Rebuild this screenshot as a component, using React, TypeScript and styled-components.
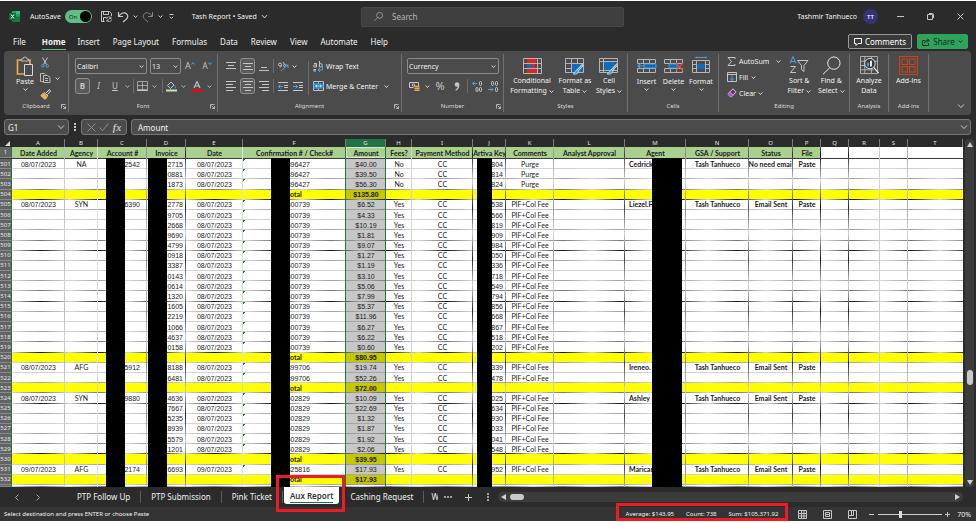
import React from "react";
import styled, { createGlobalStyle, css } from "styled-components";

const UI = `"Noto Sans", "Open Sans", sans-serif`;
const SHEET = `"Lato", "Open Sans", sans-serif`;
const DIGITS = `"Liberation Sans", Arial, sans-serif`;

const c = {
  chrome: "#2b2b2b",
  ribbon: "#4b4b4b",
  line: "#707070",
  text: "#f2f2f2",
  icon: "#c6c6c6",
  green: "#5fbf86",
  blue: "#4ba3e3",
  fill: "#0f6cbd",
};

const GlobalStyle = createGlobalStyle`
  * { box-sizing: border-box; }
  body { margin: 0; background: #fff; font-family: ${UI}; }
  button, input, select { font-family: inherit; margin: 0; padding: 0; border: 0; background: none; color: inherit; }
  svg { display: block; flex: none; }
`;

const Page = styled.div`
  min-height: 100vh;
  display: flex;
  flex-direction: column;
  padding: 1px 1px 2px 0;
  background: #fff;
  overflow: hidden;
`;

const Window = styled.main`
  flex: 1;
  display: flex;
  flex-direction: column;
  background: ${c.chrome};
  color: ${c.text};
`;

/* ---------- title bar ---------- */

const TitleBar = styled.header`
  display: grid;
  grid-template-columns: minmax(0, 361fr) minmax(0, 263fr) minmax(0, 352fr);
  align-items: center;
  height: 31px;
  font-size: 7px;
`;

const TitleGroup = styled.div<{ $end?: boolean }>`
  display: flex;
  align-items: center;
  white-space: nowrap;
  ${(p) => (p.$end ? "justify-content: flex-end; padding-right: 10px;" : "padding-left: 9px;")}
`;

const AutoSave = styled.label`
  display: flex;
  align-items: center;
  gap: 4px;
  margin: 0 9px 0 10px;
`;

const Switch = styled.span`
  position: relative;
  display: flex;
  align-items: center;
  width: 27px;
  height: 13px;
  padding-left: 4px;
  border-radius: 7px;
  background: ${c.green};
  color: #1c2b22;
  font-size: 6px;
  input {
    position: absolute;
    inset: 0;
    opacity: 0;
  }
  &::after {
    content: "";
    position: absolute;
    right: 1px;
    width: 11px;
    height: 11px;
    border-radius: 50%;
    background: #000;
  }
`;

const IconButton = styled.button<{ $w?: number; $h?: number; $on?: boolean; $color?: string }>`
  display: flex;
  flex: none;
  align-items: center;
  justify-content: center;
  width: ${(p) => p.$w ?? 12}px;
  height: ${(p) => p.$h ?? 14}px;
  color: ${(p) => p.$color ?? c.icon};
  ${(p) => p.$on && css`
    background: #5a5a5a;
    border: 1px solid #8f8f8f;
    border-radius: 3px;
  `}
`;

const DocTitle = styled.button`
  display: flex;
  align-items: center;
  gap: 4px;
  margin-left: 11px;
  font-size: 7px;
`;

const SearchBox = styled.label`
  display: flex;
  align-items: center;
  gap: 9px;
  height: 20px;
  padding-left: 12px;
  border: 1px solid #484848;
  border-radius: 2px;
  background: #3f3f3f;
  color: #b4b4b4;
  input {
    flex: 1;
    font-size: 8px;
    outline: none;
    &::placeholder { color: #b4b4b4; opacity: 1; }
  }
`;

const Avatar = styled.span`
  display: flex;
  align-items: center;
  justify-content: center;
  width: 15px;
  height: 15px;
  margin: 0 16px 0 6px;
  border-radius: 50%;
  background: #373277;
  font-size: 6px;
  font-weight: 600;
`;

const Controls = styled.div`
  display: flex;
  gap: 18px;
`;

/* ---------- ribbon tabs ---------- */

const TabRow = styled.nav`
  display: flex;
  align-items: center;
  height: 19px;
  padding: 0 8px 0 7px;
`;

const RibbonTab = styled.button<{ $active?: boolean }>`
  height: 16px;
  margin: 0 7px 0 6px;
  font-size: 8px;
  line-height: 15px;
  white-space: nowrap;
  ${(p) => p.$active && css`
    margin: 0 6px 0 9px;
    font-weight: 700;
    border-bottom: 1px solid ${c.green};
  `}
`;

const TabActions = styled.div`
  display: flex;
  gap: 5px;
  margin-left: auto;
`;

const ActionButton = styled.button<{ $primary?: boolean }>`
  display: flex;
  align-items: center;
  justify-content: center;
  gap: 3px;
  width: ${(p) => (p.$primary ? 51 : 64)}px;
  height: 15px;
  border: 1px solid ${(p) => (p.$primary ? "#2fa35c" : "#9a9a9a")};
  border-radius: 2px;
  background: ${(p) => (p.$primary ? "#2fa35c" : "#3a3a3a")};
  color: ${(p) => (p.$primary ? "#10291a" : "#fff")};
  font-size: 8px;
`;

/* ---------- ribbon ---------- */

const Ribbon = styled.section`
  display: grid;
  grid-template-columns:
    minmax(0, 65fr) minmax(0, 149fr) minmax(0, 184fr) minmax(0, 102fr) minmax(0, 124fr)
    minmax(0, 91fr) minmax(0, 131fr) minmax(0, 39fr) minmax(0, 40fr) minmax(0, 42fr);
  height: 64px;
  margin: 0 5px 4px 4px;
  padding-top: 3px;
  border-radius: 4px;
  background: ${c.ribbon};
  font-size: 7px;
`;

const Group = styled.div`
  display: flex;
  flex-direction: column;
  height: 58px;
  border-right: 1px solid ${c.line};
`;

const GroupBody = styled.div<{ $gap?: number; $pad?: number; $center?: boolean }>`
  flex: 1;
  display: flex;
  gap: ${(p) => p.$gap ?? 0}px;
  padding-left: ${(p) => p.$pad ?? 0}px;
  ${(p) => p.$center && "justify-content: center;"}
`;

const GroupLabel = styled.div`
  position: relative;
  height: 11px;
  font-size: 6px;
  line-height: 11px;
  text-align: center;
  color: #dcdcdc;
  svg {
    position: absolute;
    right: 2px;
    top: 3px;
  }
`;

const Stack = styled.div<{ $gap?: number; $top?: number }>`
  display: flex;
  flex-direction: column;
  gap: ${(p) => p.$gap ?? 4}px;
  padding-top: ${(p) => p.$top ?? 4}px;
`;

const Line = styled.div<{ $gap?: number; $h?: number }>`
  display: flex;
  align-items: center;
  gap: ${(p) => p.$gap ?? 0}px;
  height: ${(p) => p.$h ?? 16}px;
  white-space: nowrap;
`;

const Rule = styled.span<{ $h?: number; $gap?: number }>`
  flex: none;
  width: 1px;
  height: ${(p) => p.$h ?? 14}px;
  margin: 0 ${(p) => p.$gap ?? 2}px;
  background: #6c6c6c;
`;

const BigButton = styled.button<{ $w: number }>`
  display: flex;
  flex: none;
  flex-direction: column;
  align-items: center;
  width: ${(p) => p.$w}px;
  padding-top: 2px;
  font-size: 7px;
  line-height: 10px;
  white-space: nowrap;
  > svg { margin-bottom: 1px; }
`;

const BigText = styled.span`
  display: flex;
  align-items: center;
  gap: 2px;
  height: 10px;
`;

const TextButton = styled.button<{ $gap?: number }>`
  display: flex;
  align-items: center;
  gap: ${(p) => p.$gap ?? 3}px;
  font-size: 7px;
  white-space: nowrap;
`;

const Picker = styled.span<{ $w: number }>`
  position: relative;
  display: flex;
  align-items: center;
  width: ${(p) => p.$w}px;
  height: 16px;
  border: 1px solid #8c8c8c;
  border-radius: 2px;
  select {
    appearance: none;
    width: 100%;
    height: 100%;
    padding-left: 1px;
    font-size: 7px;
    outline: none;
  }
  svg {
    position: absolute;
    right: 2px;
    pointer-events: none;
  }
`;

const Glyph = styled.span<{ $size?: number; $bold?: boolean; $italic?: boolean; $under?: boolean }>`
  font-size: ${(p) => p.$size ?? 8}px;
  line-height: 10px;
  font-weight: ${(p) => (p.$bold ? 700 : 400)};
  font-style: ${(p) => (p.$italic ? "italic" : "normal")};
  text-decoration: ${(p) => (p.$under ? "underline" : "none")};
`;

const Collapse = styled.div`
  display: flex;
  align-items: flex-end;
  justify-content: flex-end;
  height: 58px;
  padding: 0 5px 1px 0;
`;

/* ---------- formula bar ---------- */

const FormulaBar = styled.div`
  display: flex;
  align-items: center;
  height: 16px;
  margin: 0 5px 4px 4px;
`;

const Box = styled.div<{ $w?: number }>`
  display: flex;
  align-items: center;
  justify-content: space-between;
  ${(p) => (p.$w ? `width: ${p.$w}px; flex: none;` : "flex: 1;")}
  height: 16px;
  padding: 0 3px;
  border: 1px solid #767676;
  border-radius: 3px;
  background: ${c.ribbon};
  color: ${c.icon};
  input {
    flex: 1;
    min-width: 0;
    color: ${c.text};
    font-size: 8px;
    outline: none;
  }
`;

const FormulaInput = styled(Box)`
  margin-left: 4px;
  padding: 0 2px 0 6px;
`;

const Fx = styled.span`
  font: italic 700 10px "Liberation Serif", serif;
`;

const Dots = styled.span`
  width: 12px;
  display: flex;
  justify-content: center;
  color: ${c.icon};
`;

/* ---------- sheet ---------- */

type Col = { letter: string; width: number; title?: string; line: string };

const columns: Col[] = [
  { letter: "A", width: 53, title: "Date Added", line: "#b9b9b9" },
  { letter: "B", width: 33, title: "Agency", line: "#e6e6e6" },
  { letter: "C", width: 49, title: "Account #", line: "#8a8a8a" },
  { letter: "D", width: 39, title: "Invoice", line: "#222" },
  { letter: "E", width: 57, title: "Date", line: "#e6e6e6" },
  { letter: "F", width: 103, title: "Confirmation # / Check#", line: "#217346" },
  { letter: "G", width: 40, title: "Amount", line: "#217346" },
  { letter: "H", width: 26, title: "Fees?", line: "#d0d0d0" },
  { letter: "I", width: 61, title: "Payment Method", line: "#222" },
  { letter: "J", width: 33, title: "Artiva Key", line: "#333" },
  { letter: "K", width: 48, title: "Comments", line: "#999" },
  { letter: "L", width: 71, title: "Analyst Approval", line: "#444" },
  { letter: "M", width: 61, title: "Agent", line: "#888" },
  { letter: "N", width: 63, title: "GSA / Support", line: "#555" },
  { letter: "O", width: 44, title: "Status", line: "#333" },
  { letter: "P", width: 28, title: "File", line: "#111" },
  { letter: "Q", width: 28, line: "#222" },
  { letter: "R", width: 31, line: "#ccc" },
  { letter: "S", width: 28, line: "#aaa" },
  { letter: "T", width: 55, line: "transparent" },
];

const template = `12px ${columns.map((k) => `minmax(0, ${k.width}fr)`).join(" ")}`;

type Entry = {
  total?: boolean;
  date?: string;
  agency?: string;
  account?: string;
  invoice?: string;
  conf?: string;
  amount: string;
  fee?: string;
  key?: string;
  note?: string;
  agent?: string;
  status?: string;
  day?: string;
};

type Lead = { date: string; agency: string; account: string; agent: string; status: string };

function block(lead: Lead, conf: string, fee: string, note: string, lines: string[], total: string): Entry[] {
  const rows: Entry[] = lines.map((l, i) => {
    const [invoice, amount, key] = l.split(" ");
    return { ...(i === 0 ? lead : {}), day: lead.date, invoice, amount, key, conf, fee, note };
  });
  return [...rows, { total: true, conf: "otal", amount: total }];
}

const entries: Entry[] = [
  ...block(
    { date: "08/07/2023", agency: "NA", account: "2542", agent: "Cedrick", status: "No need email" },
    "396427", "No", "Purge",
    ["2715 $40.00 804", "0881 $39.50 814", "1873 $56.30 824"],
    "$135.80",
  ),
  ...block(
    { date: "08/07/2023", agency: "SYN", account: "6390", agent: "Liezel.F", status: "Email Sent" },
    "400739", "Yes", "PIF+Col Fee",
    [
      "2778 $6.52 538", "9705 $4.33 566", "2668 $10.19 819", "9690 $1.81 909", "4799 $9.07 984",
      "0918 $1.27 050", "3387 $1.19 336", "0143 $3.10 718", "0614 $5.06 549", "1320 $7.99 794",
      "1605 $5.37 856", "2219 $11.96 668", "1066 $6.27 867", "4637 $6.22 518", "0158 $0.60 202",
    ],
    "$80.95",
  ),
  ...block(
    { date: "08/07/2023", agency: "AFG", account: "5912", agent: "Ireneo.", status: "Email Sent" },
    "399706", "Yes", "PIF+Col Fee",
    ["8188 $19.74 339", "6481 $52.26 478"],
    "$72.00",
  ),
  ...block(
    { date: "08/07/2023", agency: "SYN", account: "9880", agent: "Ashley", status: "Email Sent" },
    "402829", "Yes", "PIF+Col Fee",
    ["4636 $10.09 025", "7667 $22.69 634", "5235 $1.32 930", "8939 $1.87 033", "5579 $1.92 041", "1201 $2.06 548"],
    "$39.95",
  ),
  ...block(
    { date: "09/07/2023", agency: "AFG", account: "2174", agent: "Marican", status: "Email Sent" },
    "325816", "Yes", "PIF+Col Fee",
    ["6693 $17.93 952"],
    "$17.93",
  ),
];

const SheetArea = styled.div`
  flex: 1;
  display: flex;
`;

const SheetWrap = styled.div`
  position: relative;
  flex: 1;
  min-width: 0;
  display: flex;
`;

const Table = styled.table`
  flex: 1;
  min-width: 0;
  display: flex;
  flex-direction: column;
  background: #fff;
  color: #1a1a1a;
  font-family: ${SHEET};
  font-size: 7px;
`;

const Head = styled.thead`
  display: block;
`;

const LetterRow = styled.tr`
  display: grid;
  grid-template-columns: ${template};
  height: 8px;
  background: ${c.chrome};
`;

const Letter = styled.th<{ $on?: boolean }>`
  display: flex;
  align-items: center;
  justify-content: center;
  padding: 0;
  border-right: 1px solid #7a7a7a;
  background: ${(p) => (p.$on ? "#217346" : c.chrome)};
  color: #e4e4e4;
  font: 400 6px/8px ${UI};
`;

const Corner = styled.td`
  display: flex;
  align-items: flex-end;
  justify-content: flex-end;
  padding: 0 2px 1px 0;
`;

const TitleRow = styled.tr`
  display: grid;
  grid-template-columns: ${template};
  height: 12px;
  border-bottom: 1px solid #3a3a3a;
`;

const TitleCell = styled.th<{ $filled: boolean; $on?: boolean }>`
  display: flex;
  align-items: center;
  justify-content: center;
  overflow: hidden;
  padding: 0;
  background: ${(p) => (p.$filled ? "#a9d08e" : "#fff")};
  box-shadow: ${(p) => (p.$on ? "inset 0 0 0 1px #d5ead0" : "none")};
  white-space: nowrap;
`;

const RowHead = styled.th`
  display: flex;
  align-items: center;
  justify-content: center;
  overflow: hidden;
  padding: 0;
  border-right: 1px solid #217346;
  border-bottom: 1px solid #8a8a8a;
  background: #636363;
  color: #e8e8e8;
  font: 400 6px/8px ${UI};
`;

const Body = styled.tbody`
  flex: 1;
  display: grid;
  grid-template-rows: repeat(32, minmax(10px, 1fr)) 2px;
`;

const Row = styled.tr<{ $total?: boolean }>`
  --ink: #a2a2a2;
  display: grid;
  grid-template-columns: ${template};
  min-height: 0;
  overflow: hidden;
  background:
    linear-gradient(90deg, transparent, var(--ink), transparent) 12px 100% / 58px 1px repeat-x,
    linear-gradient(#d6d6d6, #d6d6d6) 0 100% / 100% 1px no-repeat,
    ${(p) => (p.$total ? "#ffff00" : "#fff")};
  font-weight: ${(p) => (p.$total ? 700 : 400)};
  &:nth-child(5n + 1) { --ink: #cfcfcf; }
  &:nth-child(5n + 3) { --ink: #777; }
  &:nth-child(5n + 4) { --ink: #111; }
`;

const Cell = styled.td<{ $align?: "end" | "start"; $pad?: number; $bold?: boolean }>`
  display: flex;
  align-items: center;
  justify-content: ${(p) => (p.$align ? `flex-${p.$align}` : "center")};
  min-width: 0;
  overflow: hidden;
  padding: 0;
  ${(p) => p.$align === "end" && `padding-right: ${p.$pad}px;`}
  ${(p) => p.$align === "start" && `padding-left: ${p.$pad}px;`}
  ${(p) => p.$bold && "font-weight: 700;"}
  line-height: 9px;
  white-space: nowrap;
`;

const NumberCell = styled(Cell)<{ $tick?: boolean }>`
  font-family: ${DIGITS};
  ${(p) => p.$tick && "background: linear-gradient(135deg, #0d7a1d 2px, transparent 2px) no-repeat;"}
`;

const AmountCell = styled(NumberCell)`
  background: rgba(0, 0, 0, 0.22);
`;

const Overlay = styled.div`
  position: absolute;
  inset: 8px 0 0 0;
  display: grid;
  grid-template-columns: ${template};
  pointer-events: none;
`;

const ColumnLine = styled.div<{ $color: string; $solid: boolean }>`
  display: flex;
  padding-top: 11px;
  background: ${(p) =>
    p.$solid
      ? `linear-gradient(${p.$color}, ${p.$color}) 100% 0 / 1px 100% no-repeat`
      : `linear-gradient(#d4d4d4, ${p.$color} 50%, #d4d4d4) 100% 34px / 1px 52px repeat-y`};
`;

const Redaction = styled.span<{ $left: number; $w: number }>`
  width: ${(p) => p.$w}px;
  margin-left: ${(p) => p.$left}px;
  background: #000;
`;

const VScroll = styled.div`
  width: 13px;
  display: flex;
  flex-direction: column;
  align-items: center;
  background: ${c.chrome};
`;

const VTrack = styled.div`
  flex: 1;
  width: 9px;
  display: flex;
  flex-direction: column;
  align-items: center;
  padding: 3px 0 2px;
  border-radius: 4px;
  background: #3c3c3c;
`;

const Thumb = styled.span<{ $w: number; $h: number }>`
  width: ${(p) => p.$w}px;
  height: ${(p) => p.$h}px;
  border-radius: 3px;
  background: #c9c9c9;
`;

const Space = styled.span<{ $grow: number }>`
  flex: ${(p) => p.$grow};
`;

/* ---------- sheet tabs ---------- */

const SheetTabs = styled.nav`
  display: flex;
  align-items: center;
  height: 20px;
  padding-right: 13px;
  font-size: 8px;
`;

const Arrows = styled.div`
  display: flex;
  gap: 9px;
  width: 67px;
  padding-left: 11px;
`;

const SheetTab = styled.button`
  height: 12px;
  padding: 0 10px;
  border-right: 1px solid #5c5c5c;
  font-size: 8px;
  line-height: 12px;
  white-space: nowrap;
`;

const ActiveWrap = styled.div`
  position: relative;
  align-self: flex-start;
  margin: 0 1px;
`;

const ActiveTab = styled.button`
  height: 17px;
  padding: 0 6px;
  border-radius: 0 0 3px 3px;
  background: #fff;
  color: #333;
  font-size: 8px;
  font-weight: 600;
  span {
    display: block;
    height: 14px;
    border-bottom: 1px solid #217346;
    line-height: 14px;
    white-space: nowrap;
  }
`;

const Highlight = styled.span<{ $inset: string }>`
  position: absolute;
  inset: ${(p) => p.$inset};
  border: 3px solid #ed1c24;
  pointer-events: none;
`;

const ClippedTab = styled(SheetTab)`
  width: 7px;
  padding: 0;
  margin-left: 7px;
  border: 0;
  overflow: hidden;
`;

const HTrack = styled.div`
  flex: 1;
  display: flex;
  align-items: center;
  gap: 3px;
  height: 10px;
  padding: 0 3px;
  border-radius: 5px;
  background: #3c3c3c;
`;

/* ---------- status bar ---------- */

const StatusBar = styled.footer`
  display: flex;
  align-items: center;
  height: 14px;
  padding: 0 5px 0 4px;
  background: #343434;
  font-size: 6px;
  white-space: nowrap;
`;

const Stats = styled.div`
  position: relative;
  display: flex;
  gap: 12px;
  height: 14px;
  align-items: center;
  justify-content: center;
  width: 172px;
  margin: 0 2px 0 auto;
`;

const Slider = styled.input`
  appearance: none;
  width: 64px;
  height: 8px;
  background: linear-gradient(#cfcfcf, #cfcfcf) 0 50% / 100% 1px no-repeat;
  &::-webkit-slider-thumb {
    appearance: none;
    width: 3px;
    height: 7px;
    background: #dedede;
  }
`;

const ZoomLevel = styled.output`
  width: 19px;
  font-size: 7px;
  text-align: right;
`;

/* ---------- icons ---------- */

type SvgProps = { w: number; h: number; vb?: string; children: React.ReactNode };

const Svg = ({ w, h, vb, children }: SvgProps) => (
  <svg width={w} height={h} viewBox={vb ?? `0 0 ${w} ${h}`} fill="none" stroke="currentColor" strokeWidth="1" aria-hidden="true">
    {children}
  </svg>
);

const Chevron = ({ size = 5 }: { size?: number }) => (
  <Svg w={size} h={size} vb="0 0 6 6"><path d="M.8 1.8 3 4.2 5.2 1.8" strokeWidth={size > 6 ? 0.75 : 1} /></Svg>
);

const Launcher = () => (
  <Svg w={5} h={5} vb="0 0 6 6"><path d="M.5 5.500V.5h5M2 2l3.200 3.200M5.500 2.600v2.900H2.600" strokeWidth=".9" /></Svg>
);

const Magnifier = ({ size, weight = 1 }: { size: number; weight?: number }) => (
  <Svg w={size} h={size} vb="0 0 20 20"><g strokeWidth={weight}><circle cx="12.500" cy="7.500" r="6.500" /><path d="M8 12.500 1 19.300" /></g></Svg>
);

const Tri = ({ d }: { d: string }) => (
  <Svg w={6} h={6}><path d={d} fill="#d0d0d0" stroke="none" /></Svg>
);

const alignLines = (widths: number[], xs: number[], h: number, ys: number[]) => (
  <Svg w={10} h={h}>
    <path d={widths.map((wd, i) => `M${xs[i]} ${ys[i]}h${wd}`).join("")} />
  </Svg>
);

const ExcelIcon = () => (
  <Svg w={11} h={11}>
    <path d="M3 0h8v11H3z" fill="#21a366" stroke="none" />
    <path d="M3 5.500h8V11H3z" fill="#107c41" stroke="none" />
    <path d="M7 0h4v3H7z" fill="#33c481" stroke="none" />
    <path d="M0 2h7v7H0z" fill="#0e6b38" stroke="none" />
    <path d="m2 3.500 3 4m0-4-3 4" stroke="#fff" />
  </Svg>
);

const SaveIcon = () => (
  <Svg w={11} h={11}>
    <path d="M.5.5h8l2 2V5M.5.5v10h3M2.500.5v3h5v-3M2.500 10.500v-4h3" />
    <path d="M5.500 8a2.300 2.300 0 0 1 4.400-.8M10 5.500v2H8M10.500 8.500a2.300 2.300 0 0 1-4.400.8M6 11V9h2" strokeWidth=".8" />
  </Svg>
);

const UndoIcon = () => (
  <Svg w={12} h={12}><path d="M1.500 1v4.500H6M1.700 5.300C4 2 7.500.8 9.500 2.700s1.500 4-.5 5.800L6 11" strokeWidth="1.200" /></Svg>
);

const RedoIcon = () => (
  <Svg w={12} h={12}><path d="M10.500 1v4.500H6M10.300 5.300C8 2 4.500.8 2.500 2.700S1 6.700 3 8.500L6 11" /></Svg>
);

const PasteIcon = () => (
  <Svg w={18} h={20}>
    <path d="M6 4H1.500v14H8M11 4h3v4" stroke="#f0a93a" strokeWidth="1.700" />
    <path d="M5 5V3h2a2 2 0 0 1 4 0h1.500v2z" stroke="#bdbdbd" fill={c.ribbon} />
    <path d="M8.500 8.500h8v11h-8z" stroke="#d8d8d8" fill={c.ribbon} />
  </Svg>
);

const CutIcon = () => (
  <Svg w={8} h={11}>
    <path d="m1.500.5 4 7M6.500.5l-4 7" />
    <circle cx="1.800" cy="8.800" r="1.300" stroke={c.blue} /><circle cx="6.200" cy="8.800" r="1.300" stroke={c.blue} />
  </Svg>
);

const CopyIcon = () => (
  <Svg w={11} h={10}><path d="M3.500 8.500h-3v-8h4l1 1M3.500 2.500h4l2.500 2v5H3.500zM5 5.500h3M5 7.500h3" strokeWidth=".9" /></Svg>
);

const BrushIcon = () => (
  <Svg w={11} h={11}>
    <path d="m6 4 3.500-3.500L10.500 2 7.500 5.500M4 3.500 8 7" stroke="#ddd" />
    <path d="M3.500 4 .8 6.500l4 4L7.500 8z" fill="#eab54d" stroke="#eab54d" />
  </Svg>
);

const GridIcon = () => (
  <Svg w={11} h={10}><path d="M.5.5h10v8H.5zM5.500.5v8M.5 4.500h10" strokeWidth=".7" /><path d="M0 9.500h11" /></Svg>
);

const FillIcon = () => (
  <Svg w={11} h={11}>
    <path d="M5 1 1.500 4.500l3 3L8 4zM5 1l3 3" /><path d="M8.500 4.500c1 1.200 1.200 2 .5 2.800" stroke={c.blue} />
    <path d="M0 9.500h11" stroke="#c9e8b5" strokeWidth="2" />
  </Svg>
);

const FontColorIcon = () => (
  <Svg w={10} h={11}><path d="m2 7 3-6.500L8 7M3 5h4" strokeWidth="1.100" /><path d="M0 9.700h10" stroke="#f00" strokeWidth="2.200" /></Svg>
);

const OrientIcon = () => (
  <Svg w={12} h={11}>
    <circle cx="3" cy="3.500" r="1.500" /><path d="M5 4.500 2.800 6.500M6 1l2.500 3.500" /><circle cx="7.500" cy="4.500" r="1" />
    <path d="m4 10 7-6M11 7V4H8" stroke={c.blue} />
  </Svg>
);

const WrapIcon = () => (
  <Svg w={10} h={11}>
    <path d="M1 2.500h2.500V6H1.500a1 1 0 0 1 0-2h2M6.500 0v6h1a1.500 1.500 0 0 0 0-3.500h-1M3 8.500H.8V10H3" stroke={c.icon} />
    <path d="M9.500 5v4H5m2-2L5 9l2 2" stroke={c.blue} />
  </Svg>
);

const MergeIcon = () => (
  <Svg w={11} h={10}>
    <path d="M.5.5h10v9H.5z" stroke="#a9c4d8" /><path d="M1 3h9v4H1z" fill={c.fill} stroke={c.blue} />
    <path d="M5.500.5v2M5.500 7.500v2" stroke="#a9c4d8" /><path d="M2.500 5h6M4 3.800 2.500 5 4 6.200M7 3.800 8.500 5 7 6.200" stroke="#fff" strokeWidth=".8" />
  </Svg>
);

const IndentIcon = ({ out }: { out?: boolean }) => (
  <Svg w={10} h={9}>
    <path d="M0 .5h10M6 3.500h4M6 5.500h4M0 8.500h10" />
    <path d={out ? "M5 4.500H.5M2.500 2.500l-2 2 2 2" : "M0 4.500h4.500M2.500 2.500l2 2-2 2"} stroke={c.blue} />
  </Svg>
);

const AccountingIcon = () => (
  <Svg w={11} h={10}>
    <path d="M.5 1.500h9V6M.5 1.500v5h4" /><circle cx="4.500" cy="4" r="1.200" />
    <path d="M5.500 5.500h5M5.500 7.500h5M5.500 9.300h5" stroke="#e8b04a" strokeWidth="1.300" />
  </Svg>
);

const DecimalIcon = ({ less }: { less?: boolean }) => (
  <Svg w={11} h={11}>
    <path d={less ? "M0 8.500h5M3 6.500l2 2-2 2" : "M5 2.500H.5m2-2-2 2 2 2"} stroke={c.blue} />
    <rect x="7.500" y=".5" width="2" height="4" rx="1" />
    <rect x={less ? 3.5 : 4} y={less ? 0.5 : 6.5} width="2" height="4" rx="1" />
    <rect x="7.500" y="6.500" width="2" height="4" rx="1" />
  </Svg>
);

const CondIcon = () => (
  <Svg w={19} h={17}>
    <path d="M.5.5h18v15H.5zM4.500.5v15M14.500.5v15M.5 5.500h18M.5 10.500h18" stroke="#b4b4b4" />
    <path d="M4 1h9v4H4zM4 11h10v4H4z" fill="#e3241b" stroke="none" />
    <path d="M4 6h5v4H4z" fill={c.fill} stroke="none" /><path d="M9 6h3v4H9z" fill="#e3241b" stroke="none" />
  </Svg>
);

const TableBrushIcon = ({ whole }: { whole?: boolean }) => (
  <Svg w={20} h={17}>
    <path d={whole ? "M.5.5h18v14H.5zM4.500.5v14M.5 3.500h18M.5 12.500h18" : "M.5.5h18v14H.5zM6.500.5v14M12.500.5v14M.5 5.500h18M.5 10.500h18"} stroke="#b4b4b4" />
    <path d={whole ? "M5 4h11v8H5z" : "M7 6h11v8H7z"} fill={c.fill} stroke="none" />
    <path d="m18.500 6-6 6.500" stroke="#eee" strokeWidth="2.200" /><path d="m18.500 6-6 6.500" stroke="#666" strokeWidth=".8" />
    <path d="M12.500 11.500c-2.500.5-1.500 3-4.500 4.500 3 .8 5.500-.5 6-3z" fill={c.blue} stroke="#d7ecfb" strokeWidth=".6" />
  </Svg>
);

const CellsIcon = ({ kind }: { kind: "insert" | "delete" | "format" }) => (
  <Svg w={20} h={18}>
    {kind === "format" ? (
      <>
        <path d="M1.500 4.500h17v12h-17zM5.500 4.500v12M14.500 4.500v12M1.500 8.500h17M1.500 12.500h17" stroke="#b4b4b4" />
        <path d="M6 8h8v5H6z" fill={c.fill} stroke="none" /><path d="M5 1.500h10M5 .5v2M15 .5v2" stroke={c.blue} />
      </>
    ) : (
      <>
        <path d="M.5 2.500h18v4H.5zM.5 11.500h18v4H.5zM6.500 2.500v4M12.500 2.500v4M6.500 11.500v4M12.500 11.500v4" stroke="#b4b4b4" />
        <path d={kind === "insert" ? "M7 7h12v4H7z" : "M5 7h8v4H5z"} fill={c.fill} stroke={c.blue} strokeWidth=".8" />
        {kind === "insert" && <path d="M8 9H1m3-3L1 9l3 3" stroke={c.blue} strokeWidth="1.200" />}
        {kind === "delete" && <path d="m12 6 7 7.500m0-7.500-7 7.500" stroke="#f0483e" strokeWidth="1.200" />}
      </>
    )}
  </Svg>
);

const SigmaIcon = () => (
  <Svg w={9} h={9}><path d="M8 2V.5H1l3.500 4L1 8.500h7V7" stroke={c.icon} /></Svg>
);

const FillDownIcon = () => (
  <Svg w={10} h={10}><path d="M.5.5h9v9h-9zM.5 2.500h9" stroke={c.icon} /><path d="M5 3.500v5M3 6.500l2 2 2-2" stroke={c.blue} /></Svg>
);

const EraserIcon = () => (
  <Svg w={10} h={10}>
    <path d="m6 .8 3.200 3.200L4.500 8.700 1.300 5.500z" stroke="#e3b8ec" /><path d="m3 3.800 3.200 3.200-1.700 1.700H3L1 6.500z" fill="#b84bd0" stroke="#d68be6" strokeWidth=".8" />
  </Svg>
);

const SortIcon = () => (
  <Svg w={20} h={18}>
    <path d="m1 7.500 3-7 3 7M2 5.500h4" stroke={c.blue} /><path d="M1.500 10.500h5l-5 6h5.500" stroke={c.icon} />
    <path d="M8.500 4.500h10.500l-4 5v6l-2.500-2v-4z" stroke={c.icon} />
  </Svg>
);

const AnalyzeIcon = () => (
  <Svg w={20} h={20}>
    <path d="M.5.5h18v18H.5zM.5 5.500h18M.5 10h5M.5 14.500h14M5 .5v18M12 .5v4M12 14v4" stroke="#b4b4b4" />
    <circle cx="10.500" cy="8" r="5.500" fill="#3a3a3a" stroke="#e2e2e2" />
    <path d="M8.500 11V7" stroke={c.blue} strokeWidth="2" /><path d="M11.500 11V5" stroke="#fff" strokeWidth="2" />
    <path d="m14.500 12 5 6" stroke="#e2e2e2" strokeWidth="1.300" />
  </Svg>
);

const AddinsIcon = () => (
  <Svg w={19} h={19}><path d="M.5.500h18v18H.5zM3 3h5.500v5.500H3zM10.500 3H16v5.500h-5.500zM3 10.500h5.500V16H3zM10.500 10.500H16V16h-5.500z" stroke="#c9441d" strokeWidth="1.100" /></Svg>
);

/* ---------- app ---------- */

const ribbonTabs = ["File", "Home", "Insert", "Page Layout", "Formulas", "Data", "Review", "View", "Automate", "Help"];

const redactions: Record<string, [number, number]> = {
  C: [8, 19],
  D: [1, 19],
  F: [28, 19],
  J: [4, 15],
  M: [27, 30],
};

const RibbonPanel = () => (
  <Ribbon aria-label="Ribbon">
    <Group>
      <GroupBody $pad={7}>
        <BigButton $w={28}><PasteIcon /><BigText>Paste</BigText><Chevron /></BigButton>
        <Stack $gap={2} $top={1}>
          <IconButton aria-label="Cut"><CutIcon /></IconButton>
          <Line $h={14} $gap={4}><IconButton aria-label="Copy"><CopyIcon /></IconButton><Chevron /></Line>
          <IconButton aria-label="Format Painter"><BrushIcon /></IconButton>
        </Stack>
      </GroupBody>
      <GroupLabel>Clipboard<Launcher /></GroupLabel>
    </Group>

    <Group>
      <GroupBody $pad={6}>
        <Stack>
          <Line $gap={3}>
            <Picker $w={72}><select aria-label="Font"><option>Calibri</option></select><Chevron /></Picker>
            <Picker $w={31}><select aria-label="Font size"><option>13</option></select><Chevron /></Picker>
            <IconButton aria-label="Increase font size"><Glyph $size={9}>A</Glyph><Svg w={4} h={8}><path d="m.5 2.500 1.500-2 1.500 2" stroke={c.blue} /></Svg></IconButton>
            <IconButton $w={16} aria-label="Decrease font size"><Glyph>A</Glyph><Svg w={4} h={8}><path d="m.5.5 1.500 2 1.500-2" stroke={c.blue} /></Svg></IconButton>
          </Line>
          <Line>
            <IconButton $w={15} $h={16} $on aria-label="Bold"><Glyph $bold>B</Glyph></IconButton>
            <IconButton $w={17} aria-label="Italic"><Glyph $italic>I</Glyph></IconButton>
            <IconButton $w={16} aria-label="Underline"><Glyph $under>U</Glyph></IconButton>
            <IconButton $w={8} aria-label="Underline options"><Chevron /></IconButton>
            <Rule />
            <IconButton aria-label="Borders"><GridIcon /></IconButton>
            <IconButton aria-label="Border options"><Chevron /></IconButton>
            <Rule />
            <IconButton aria-label="Fill color"><FillIcon /></IconButton>
            <IconButton aria-label="Fill options"><Chevron /></IconButton>
            <IconButton $w={16} aria-label="Font color"><FontColorIcon /></IconButton>
            <IconButton $w={8} aria-label="Font color options"><Chevron /></IconButton>
          </Line>
        </Stack>
      </GroupBody>
      <GroupLabel>Font<Launcher /></GroupLabel>
    </Group>

    <Group>
      <GroupBody $pad={7}>
        <Stack>
          <Line $gap={3}>
            <IconButton aria-label="Top align">{alignLines([10, 6, 10], [0, 2, 0], 10, [1.5, 4.5, 7.5])}</IconButton>
            <IconButton $w={15} $h={16} $on aria-label="Middle align">{alignLines([10, 6, 10], [0, 2, 0], 9, [1.5, 4.5, 7.5])}</IconButton>
            <IconButton aria-label="Bottom align">{alignLines([6, 10], [2, 0], 12, [7.5, 10.5])}</IconButton>
            <Rule $gap={0} />
            <IconButton aria-label="Orientation"><OrientIcon /></IconButton>
            <Chevron />
          </Line>
          <Line $gap={3}>
            <IconButton aria-label="Align left">{alignLines([10, 7, 10, 7], [0, 0, 0, 0], 10, [0.5, 3.5, 6.5, 9.5])}</IconButton>
            <IconButton $w={15} $h={16} $on aria-label="Center">{alignLines([10, 6, 10, 6], [0, 2, 0, 2], 10, [0.5, 3.5, 6.5, 9.5])}</IconButton>
            <IconButton aria-label="Align right">{alignLines([10, 7, 10, 7], [0, 3, 0, 3], 10, [0.5, 3.5, 6.5, 9.5])}</IconButton>
            <Rule $gap={0} />
            <IconButton aria-label="Decrease indent"><IndentIcon out /></IconButton>
            <IconButton aria-label="Increase indent"><IndentIcon /></IconButton>
          </Line>
        </Stack>
        <Stack $top={7}><Rule $h={34} $gap={4} /></Stack>
        <Stack>
          <Line><TextButton $gap={3}><WrapIcon />Wrap Text</TextButton></Line>
          <Line $gap={6}><TextButton $gap={2}><MergeIcon />Merge &amp; Center</TextButton><Chevron /></Line>
        </Stack>
      </GroupBody>
      <GroupLabel>Alignment<Launcher /></GroupLabel>
    </Group>

    <Group>
      <GroupBody $pad={5}>
        <Stack>
          <Picker $w={92}><select aria-label="Number format"><option>Currency</option></select><Chevron /></Picker>
          <Line $gap={3}>
            <IconButton $w={15} aria-label="Accounting format"><AccountingIcon /></IconButton>
            <Chevron />
            <IconButton $w={14} aria-label="Percent style"><Glyph $size={11}>%</Glyph></IconButton>
            <IconButton $w={14} aria-label="Comma style">
              <Svg w={6} h={9}><circle cx="3" cy="2.500" r="2.300" fill="currentColor" stroke="none" /><path d="M4.700 2.500c.3 2.500-1 4.500-3 5.700" strokeWidth="1.200" /></Svg>
            </IconButton>
            <Rule $gap={0} />
            <IconButton aria-label="Increase decimal"><DecimalIcon /></IconButton>
            <IconButton $w={14} aria-label="Decrease decimal"><DecimalIcon less /></IconButton>
          </Line>
        </Stack>
      </GroupBody>
      <GroupLabel>Number<Launcher /></GroupLabel>
    </Group>

    <Group>
      <GroupBody $pad={4}>
        <BigButton $w={48}><Svg w={19} h={19} vb="0 -2 19 19"><CondIcon /></Svg><BigText>Conditional</BigText><BigText>Formatting <Chevron /></BigText></BigButton>
        <BigButton $w={38}><Svg w={20} h={19} vb="0 -2 20 19"><TableBrushIcon /></Svg><BigText>Format as</BigText><BigText>Table <Chevron /></BigText></BigButton>
        <BigButton $w={30}><Svg w={20} h={19} vb="0 -2 20 19"><TableBrushIcon whole /></Svg><BigText>Cell</BigText><BigText>Styles <Chevron /></BigText></BigButton>
      </GroupBody>
      <GroupLabel>Styles</GroupLabel>
    </Group>

    <Group>
      <GroupBody $pad={5}>
        <BigButton $w={27}><Svg w={20} h={20} vb="0 -1 20 20"><CellsIcon kind="insert" /></Svg><BigText>Insert</BigText><Chevron /></BigButton>
        <BigButton $w={27}><Svg w={20} h={20} vb="0 -1 20 20"><CellsIcon kind="delete" /></Svg><BigText>Delete</BigText><Chevron /></BigButton>
        <BigButton $w={28}><Svg w={20} h={20} vb="0 0 20 20"><CellsIcon kind="format" /></Svg><BigText>Format</BigText><Chevron /></BigButton>
      </GroupBody>
      <GroupLabel>Cells</GroupLabel>
    </Group>

    <Group>
      <GroupBody $pad={8} $gap={3}>
        <Stack $gap={0} $top={0}>
          <Line $h={15} $gap={7}><TextButton><SigmaIcon />AutoSum</TextButton><Chevron /></Line>
          <Line $h={16} $gap={3}><TextButton $gap={2}><FillDownIcon />Fill</TextButton><Chevron /></Line>
          <Line $h={16} $gap={2}><TextButton $gap={2}><EraserIcon />Clear</TextButton><Chevron /></Line>
        </Stack>
        <BigButton $w={30}><Svg w={20} h={19} vb="0 0 20 19"><SortIcon /></Svg><BigText>Sort &amp;</BigText><BigText>Filter <Chevron /></BigText></BigButton>
        <BigButton $w={28}><Magnifier size={19} /><BigText>Find &amp;</BigText><BigText>Select <Chevron /></BigText></BigButton>
      </GroupBody>
      <GroupLabel>Editing</GroupLabel>
    </Group>

    <Group>
      <GroupBody $center>
        <BigButton $w={36}><Svg w={19} h={19} vb="0 0 20 20"><AnalyzeIcon /></Svg><BigText>Analyze</BigText><BigText>Data</BigText></BigButton>
      </GroupBody>
      <GroupLabel>Analysis</GroupLabel>
    </Group>

    <Group>
      <GroupBody $center>
        <BigButton $w={36}><AddinsIcon /><BigText>Add-ins</BigText></BigButton>
      </GroupBody>
      <GroupLabel>Add-ins</GroupLabel>
    </Group>

    <Collapse><IconButton $w={10} $h={10} aria-label="Collapse ribbon"><Chevron size={8} /></IconButton></Collapse>
  </Ribbon>
);

const Sheet = () => (
  <SheetArea>
    <SheetWrap>
      <Table>
        <Head>
          <LetterRow>
            <Corner><Svg w={5} h={5}><path d="M5 0v5H0z" fill="#ddd" stroke="none" /></Svg></Corner>
            {columns.map((k) => <Letter key={k.letter} $on={k.letter === "G"}>{k.letter}</Letter>)}
          </LetterRow>
          <TitleRow>
            <RowHead>1</RowHead>
            {columns.map((k) => (
              <TitleCell key={k.letter} $filled={!!k.title} $on={k.letter === "G"}>{k.title}</TitleCell>
            ))}
          </TitleRow>
        </Head>
        <Body>
          {entries.map((e, i) => (
            <Row key={i} $total={e.total}>
              <RowHead>{501 + i}</RowHead>
              <NumberCell>{e.date}</NumberCell>
              <Cell>{e.agency}</Cell>
              <NumberCell $align="end" $pad={7}>{e.account}</NumberCell>
              <NumberCell $align="end" $pad={3}>{e.invoice}</NumberCell>
              <NumberCell>{e.day}</NumberCell>
              {e.total ? (
                <Cell $align="start" $pad={47}>{e.conf}</Cell>
              ) : (
                <NumberCell $align="end" $pad={36} $tick>{e.conf}</NumberCell>
              )}
              <AmountCell>{e.amount}</AmountCell>
              <Cell>{e.fee}</Cell>
              <Cell>{e.fee && "CC"}</Cell>
              <NumberCell $align="end" $pad={3}>{e.key}</NumberCell>
              <Cell>{e.note}</Cell>
              <Cell />
              <Cell $align="start" $pad={4} $bold>{e.agent}</Cell>
              <Cell $bold>{e.agent && "Tash Tanhueco"}</Cell>
              <Cell $bold>{e.status}</Cell>
              <Cell $bold>{e.agent && "Paste"}</Cell>
              <Cell /><Cell /><Cell /><Cell />
            </Row>
          ))}
          <Row><RowHead /></Row>
        </Body>
      </Table>
      <Overlay>
        <span />
        {columns.map((k) => (
          <ColumnLine key={k.letter} $color={k.line} $solid={k.line === "#217346" || k.line === "transparent"}>
            {redactions[k.letter] && <Redaction $left={redactions[k.letter][0]} $w={redactions[k.letter][1]} />}
          </ColumnLine>
        ))}
      </Overlay>
    </SheetWrap>
    <VScroll>
      <VTrack>
        <Tri d="M0 5h6L3 0z" />
        <Space $grow={223} />
        <Thumb $w={6} $h={15} />
        <Space $grow={94} />
        <Tri d="M0 1h6L3 6z" />
      </VTrack>
    </VScroll>
  </SheetArea>
);

export default function App() {
  return (
    <Page>
      <GlobalStyle />
      <Window>
        <TitleBar>
          <TitleGroup>
            <ExcelIcon />
            <AutoSave>
              AutoSave
              <Switch><input type="checkbox" role="switch" defaultChecked aria-label="AutoSave" />On</Switch>
            </AutoSave>
            <IconButton aria-label="Save"><SaveIcon /></IconButton>
            <IconButton $w={20} aria-label="Undo"><UndoIcon /></IconButton>
            <Chevron />
            <IconButton $w={20} $color="#858585" aria-label="Redo"><RedoIcon /></IconButton>
            <Chevron />
            <IconButton $w={18} aria-label="Customize toolbar"><Svg w={5} h={6}><path d="M.5.5h4M.8 2.800l1.700 1.700 1.700-1.700" /></Svg></IconButton>
            <DocTitle>Tash Report • Saved<Chevron size={7} /></DocTitle>
          </TitleGroup>
          <SearchBox>
            <Magnifier size={9} weight={1.6} />
            <input type="search" placeholder="Search" aria-label="Search" />
          </SearchBox>
          <TitleGroup $end>
            Tashmir Tanhueco
            <Avatar>TT</Avatar>
            <Controls>
              <IconButton aria-label="Minimize"><Svg w={7} h={7}><path d="M0 3.500h7" /></Svg></IconButton>
              <IconButton aria-label="Restore"><Svg w={7} h={7}><path d="M.5 1.500h5v5h-5zM2 .5h3.500a1 1 0 0 1 1 1V5" /></Svg></IconButton>
              <IconButton aria-label="Close"><Svg w={7} h={7}><path d="m.5.5 6 6m0-6-6 6" /></Svg></IconButton>
            </Controls>
          </TitleGroup>
        </TitleBar>

        <TabRow aria-label="Ribbon tabs">
          {ribbonTabs.map((t) => <RibbonTab key={t} $active={t === "Home"}>{t}</RibbonTab>)}
          <TabActions>
            <ActionButton><Svg w={8} h={8}><path d="M.5.5h7v5H4l-2 2v-2H.5z" /></Svg>Comments</ActionButton>
            <ActionButton $primary>
              <Svg w={8} h={8}><path d="M3 2.500H.5v5h6V5M2.500 5C3 3 4 2.500 6.500 2.500M5 .5l2 2-2 2" /></Svg>Share<Chevron />
            </ActionButton>
          </TabActions>
        </TabRow>

        <RibbonPanel />

        <FormulaBar>
          <Box $w={65}><input aria-label="Name box" defaultValue="G1" /><Chevron size={8} /></Box>
          <Dots><Svg w={2} h={8}><path d="M1 0v2M1 3v2M1 6v2" strokeWidth="2" /></Svg></Dots>
          <Box $w={46}>
            <IconButton $color="#8e8e8e" aria-label="Cancel"><Svg w={9} h={9}><path d="m.5.5 8 8m0-8-8 8" /></Svg></IconButton>
            <IconButton $color="#8e8e8e" aria-label="Enter"><Svg w={10} h={8}><path d="m.5 4.500 3 3 6-7" /></Svg></IconButton>
            <IconButton aria-label="Insert function"><Fx>fx</Fx></IconButton>
          </Box>
          <FormulaInput><input aria-label="Formula" defaultValue="Amount" /><Chevron size={8} /></FormulaInput>
        </FormulaBar>

        <Sheet />

        <SheetTabs aria-label="Sheets">
          <Arrows>
            <IconButton aria-label="Previous sheet" $color="#a8a8a8"><Svg w={4} h={7}><path d="m3.500.5-3 3 3 3" /></Svg></IconButton>
            <IconButton aria-label="Next sheet" $color="#a8a8a8"><Svg w={4} h={7}><path d="m.5.5 3 3-3 3" /></Svg></IconButton>
          </Arrows>
          <SheetTab>PTP Follow Up</SheetTab>
          <SheetTab>PTP Submission</SheetTab>
          <SheetTab>Pink Ticket</SheetTab>
          <ActiveWrap>
            <ActiveTab><span>Aux Report</span></ActiveTab>
            <Highlight $inset="-12px -6px -8px -8px" />
          </ActiveWrap>
          <SheetTab>Cashing Request</SheetTab>
          <ClippedTab>W</ClippedTab>
          <IconButton $w={20} aria-label="More sheets"><Svg w={8} h={2}><path d="M0 1h2M3 1h2M6 1h2" strokeWidth="1.500" /></Svg></IconButton>
          <IconButton $w={20} aria-label="New sheet"><Svg w={7} h={7}><path d="M3.500 0v7M0 3.500h7" /></Svg></IconButton>
          <IconButton $w={20} aria-label="Resize tabs"><Svg w={2} h={8}><path d="M1 0v2M1 3v2M1 6v2" strokeWidth="1.500" /></Svg></IconButton>
          <HTrack>
            <Tri d="M5 0v6L0 3z" />
            <Thumb $w={14} $h={6} />
            <Space $grow={1} />
            <Tri d="M1 0v6l5-3z" />
          </HTrack>
        </SheetTabs>

        <StatusBar>
          <span>Select destination and press ENTER or choose Paste</span>
          <Stats>
            <span>Average: $143.95</span><span>Count: 738</span><span>Sum: $105,371.92</span>
            <Highlight $inset="-4px 0 0 0" />
          </Stats>
          <IconButton $w={25} aria-label="Normal view"><Svg w={9} h={9}><path d="M.5.5h8v8h-8zM.5 3.500h8M.5 6h8M3.500.5v8M6 .5v8" /></Svg></IconButton>
          <IconButton $w={25} aria-label="Page layout view"><Svg w={9} h={9}><path d="M.5.5h8v8h-8zM2.500 2.500h4v4h-4zM3 4.500h3" /></Svg></IconButton>
          <IconButton $w={25} aria-label="Page break view"><Svg w={9} h={9}><path d="M.5.5h8v8h-8zM.5 5.500h5v-5M3.500.5v5" /></Svg></IconButton>
          <IconButton $w={13} aria-label="Zoom out"><Svg w={5} h={5}><path d="M0 2.500h5" /></Svg></IconButton>
          <Slider type="range" min={10} max={195} defaultValue={75} aria-label="Zoom" />
          <IconButton $w={10} aria-label="Zoom in"><Svg w={5} h={5}><path d="M0 2.500h5M2.500 0v5" /></Svg></IconButton>
          <ZoomLevel>70%</ZoomLevel>
        </StatusBar>
      </Window>
    </Page>
  );
}
